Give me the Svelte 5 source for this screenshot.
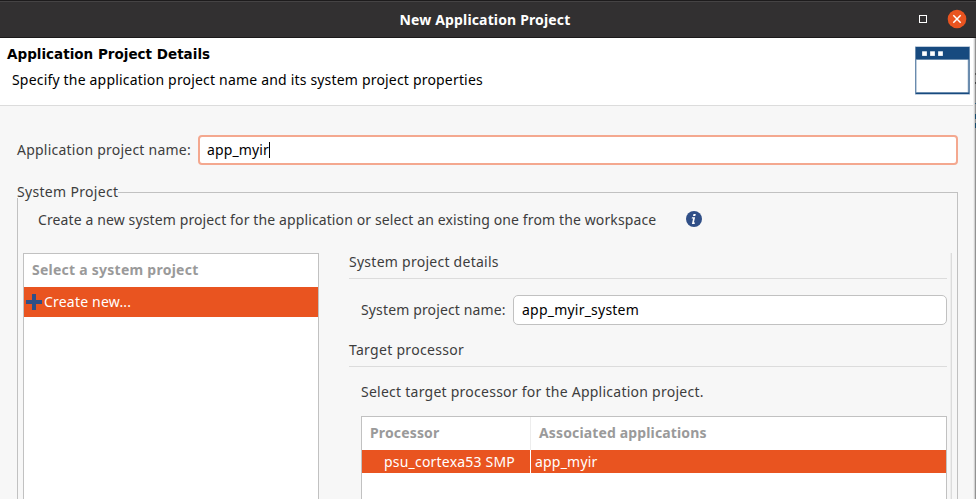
<script>
  let projectName = $state('app_myir');
  let systemName = $derived(`${projectName}_system`);
</script>

<div class="window">
  <header class="titlebar">
    <span class="spacer"></span>
    <h1>New Application Project</h1>
    <div class="controls">
      <svg width="8" height="8" viewBox="0 0 8 8" aria-label="Maximize">
        <rect x=".5" y=".5" width="7" height="7" fill="none" stroke="#fff" />
      </svg>
      <svg width="20" height="20" viewBox="0 0 20 20" aria-label="Close">
        <circle cx="10" cy="10" r="9.3" fill="#e95420" />
        <path d="M6.3 6.3l7.4 7.4M13.7 6.3l-7.4 7.4" stroke="#fff" stroke-width="1.5" />
      </svg>
    </div>
  </header>

  <section class="banner">
    <div class="banner-text">
      <h2>Application Project Details</h2>
      <p>Specify the application project name and its system project properties</p>
    </div>
    <svg class="logo" width="55" height="49" viewBox="0 0 55 49">
      <rect width="55" height="49" fill="#bfcddd" />
      <rect x=".5" y="1" width="54" height="47" fill="#174a7f" />
      <rect x="1" y="13.5" width="52.5" height="33" fill="#c2d0df" />
      <rect x="2" y="14" width="50.5" height="32" fill="#fff" />
      <path d="M7 5.2h5v4.8H7zM15 5.2h5v4.8h-5zM23 5.2h5v4.8h-5z" fill="#8fa9c4" />
      <path d="M7.3 5.5h4.4v4.2H7.3zM15.3 5.5h4.4v4.2h-4.4zM23.3 5.5h4.4v4.2h-4.4z" fill="#fff" />
    </svg>
  </section>

  <main>
    <div class="name-row">
      <span class="name-label">Application project name:</span>
      <div class="field focused"><span class="name-value">{projectName}</span><i class="caret"></i></div>
    </div>

    <section class="group">
      <div class="legend"><span>System Project</span><i></i></div>
      <div class="group-body">
        <div class="intro">
          <p>Create a new system project for the application or select an existing one from the workspace</p>
          <svg width="16" height="16" viewBox="0 0 16 16">
            <circle cx="8" cy="8" r="8" fill="#304f87" />
            <path d="M7.5 3h2.3l-.5 1.9H7zM6 6.2h3.1l-1.2 5.2h1.1L8.6 13H5.9l1.2-5.4H5.7z" fill="#fff" />
          </svg>
        </div>

        <div class="panes">
          <div class="table systems">
            <div class="thead">Select a system project</div>
            <div class="row">
              <svg width="16" height="16" viewBox="0 0 16 16">
                <path d="M6 0h4v6h6v4h-6v6H6v-6H0V6h6z" fill="#304f87" />
              </svg>
              <span>Create new...</span>
            </div>
          </div>

          <div class="details">
            <h3 class="details-title">System project details</h3>
            <div class="system-row">
              <span class="system-label">System project name:</span>
              <div class="field"><span class="system-value">{systemName}</span></div>
            </div>
            <h3 class="target-title">Target processor</h3>
            <p class="hint">Select target processor for the Application project.</p>
            <div class="table processors">
              <div class="line head">
                <div class="cell first"><b class="h-proc">Processor</b></div>
                <div class="cell"><b class="h-assoc">Associated applications</b></div>
              </div>
              <div class="line selected">
                <div class="cell first">psu_cortexa53 SMP</div>
                <div class="cell">{projectName}</div>
              </div>
            </div>
          </div>
        </div>
      </div>
    </section>
  </main>
  <div class="edge"></div>
</div>

<style>
  :global(body) { margin: 0; overflow: hidden; }
  * { box-sizing: border-box; }
  h1, h2, h3, p { margin: 0; font-weight: 400; font-size: inherit; }
  svg { display: block; flex: none; }

  .window {
    position: relative;
    display: flex;
    flex-direction: column;
    width: 976px;
    height: 499px;
    overflow: hidden;
    background: #f7f7f7;
    color: #3d3d3d;
    font: 14px/20px "Noto Sans", "Open Sans", sans-serif;
    white-space: nowrap;
  }

  .titlebar {
    display: flex;
    align-items: center;
    flex: none;
    height: 38px;
    padding-right: 9px;
    background: linear-gradient(#1d1b1c 1px, #454344 1px, #454344 2px, #323031 2px, #323031 37px, #1b191a 37px);
    color: #fff;
  }
  .spacer, .controls { flex: 1; }
  .spacer { padding-left: 3px; }
  .titlebar h1 { padding-top: 2px; font-weight: 700; letter-spacing: .15px; }
  .controls { display: flex; justify-content: flex-end; align-items: center; gap: 20px; }

  .banner {
    display: flex;
    justify-content: space-between;
    flex: none;
    height: 68px;
    padding: 6px 6px 0 7px;
    background: #fff;
    border-bottom: 1px solid #dcdcdc;
    color: #000;
  }
  .banner h2 { font: 700 13.5px/20px "DejaVu Sans", sans-serif; letter-spacing: .01px; }
  .banner p { margin-top: 6px; padding-left: 5px; letter-spacing: .185px; }
  .logo { margin-top: 2px; }

  main { flex: 1; min-height: 0; padding: 29px 18px 0 17px; display: flex; flex-direction: column; }
  .name-row { display: flex; align-items: center; justify-content: space-between; flex: none; height: 30px; }
  .name-label { letter-spacing: .23px; }
  .field {
    display: flex;
    align-items: center;
    height: 30px;
    padding: 0 8px;
    background: #fff;
    border: 1px solid #c1c1c1;
    border-radius: 5px;
    color: #000;
  }
  .focused { width: 760px; padding: 0 7px; border: 2px solid #f4a88f; border-radius: 4px; }
  .name-value { letter-spacing: .12px; }
  .caret { width: 1px; height: 16px; background: #000; }

  .group { display: flex; flex-direction: column; flex: 1; margin-top: 17px; min-height: 0; }
  .legend { display: flex; flex: none; height: 16px; letter-spacing: .31px; }
  .legend span { flex: none; width: 101px; }
  .legend i { flex: 1; margin-top: 10px; height: 6px; border: 1px solid #c1c1c1; border-width: 1px 1px 0 0; }
  .group-body { flex: 1; border: 1px solid #c1c1c1; border-width: 0 1px 0 1px; padding: 12px 5px 0; }
  .intro { display: flex; align-items: center; height: 20px; padding-left: 15px; }
  .intro p { width: 648px; letter-spacing: .117px; }
  .intro svg { margin-top: -2px; }

  .panes { display: flex; margin-top: 23px; height: 260px; }
  .table { background: #fff; border: 1px solid #c1c1c1; }
  .systems { flex: none; width: 296px; }
  .thead { height: 33px; padding: 6px 8px 0; color: #9a9a9a; font-weight: 700; letter-spacing: .25px; }
  .systems .row {
    display: flex;
    align-items: center;
    height: 30px;
    gap: 2px;
    padding-left: 2px;
    background: #e95420;
    color: #fff;
    letter-spacing: .2px;
  }
  .row span { line-height: 28px; }

  .details {
    display: flex;
    flex-direction: column;
    flex: 1;
    margin-left: 30px;
    padding-right: 4px;
    border-right: 1px solid #dcdcdc;
    box-shadow: inset -1px 0 #ededed;
  }
  .details h3 { flex: none; height: 26px; line-height: 18px; border-bottom: 1px solid #dcdcdc; }
  .details .details-title { letter-spacing: .26px; }
  .details .target-title { margin-top: 16px; letter-spacing: .3px; }
  .system-row { display: flex; align-items: center; justify-content: space-between; flex: none; margin-top: 16px; padding-left: 12px; }
  .system-row .field { width: 434px; }
  .system-label { letter-spacing: .14px; }
  .system-value { letter-spacing: .22px; }
  .hint { margin: 15px 0 0 12px; letter-spacing: .25px; }
  .processors { flex: 1; margin: 14px 0 0 12px; }
  .line { display: flex; height: 23px; letter-spacing: .2px; }
  .line .cell { flex: 1; padding: 2px 0 0 4px; }
  .line .first { flex: none; width: 169px; padding-left: 22px; border-right: 1px solid #fff; }
  .head { height: 33px; color: #9a9a9a; }
  .head .cell { padding: 6px 0 0 8px; }
  .head .first { border-color: #ededed; padding-left: 8px; }
  .h-proc { letter-spacing: .15px; }
  .h-assoc { letter-spacing: .14px; }
  .selected { background: #e95420; color: #fff; }

  .edge {
    position: absolute;
    top: 38px;
    right: 0;
    bottom: 0;
    width: 3px;
    background:
      linear-gradient(#555, #555) 2px 35px / 1px 2px no-repeat,
      linear-gradient(#444, #444) 2px 44px / 1px 2px no-repeat,
      linear-gradient(#2b5877, #2b5877) 2px 65px / 1px 1px no-repeat,
      linear-gradient(#174a6b, #174a6b) 2px 76px / 1px 5px no-repeat,
      linear-gradient(#174a6b, #174a6b) 2px 85px / 1px 5px no-repeat,
      linear-gradient(90deg, #efefef 1px, #d2d2d2 1px, #d2d2d2 2px, #929292 2px);
  }
</style>
